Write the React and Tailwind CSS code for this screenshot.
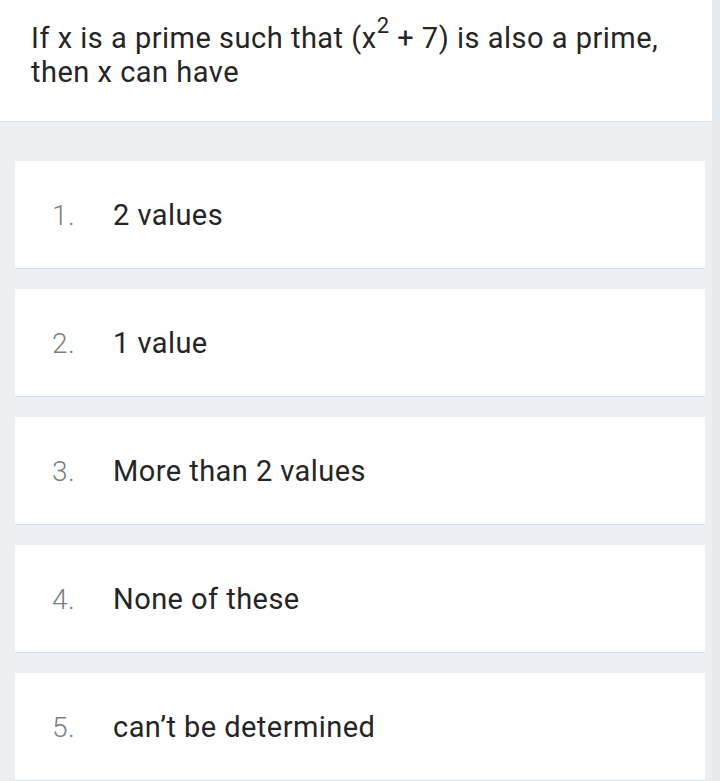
const options = ["2 values", "1 value", "More than 2 values", "None of these", "can\u2019t be determined"];

const App = () => {
    return (
        <div className="flex h-[781px] w-[720px] overflow-hidden bg-[#e6e9ec]" style={{ fontFamily: "Roboto, 'Liberation Sans', sans-serif" }}>
            <div className="flex w-[712px] flex-col bg-[#eceff1]">
                <div className="h-[123px] border-b border-[#dde1e4] bg-white px-[31px] pt-[19px] text-[29px] leading-[34px] tracking-[0.5px] text-[#252525]">
                    If x is a prime such that (x<sup className="relative top-[-4px] align-super text-[22px] leading-none">2</sup> + 7) is also a prime,
                    <br />
                    then x can have
                </div>
                <div className="flex flex-col gap-[20px] pl-[15px] pr-[7px] pt-[39px]">
                    {options.map((opt, i) => (
                        <div key={i} className="flex h-[108px] items-center border-b border-[#dadfe3] bg-white pt-[3px]">
                            <span className="w-[98px] pl-[37px] text-[28px] font-light tracking-[0.5px] text-[#7a7f85]">{i + 1}.</span>
                            <span className="text-[29px] tracking-[0.45px] text-[#252525]">{opt}</span>
                        </div>
                    ))}
                </div>
            </div>
        </div>
    );
};

export default App;
